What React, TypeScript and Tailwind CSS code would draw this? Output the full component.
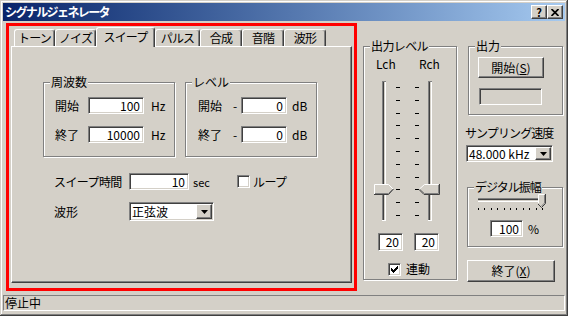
import React from "react";

const sunken =
  "border border-[#808080] border-b-white border-r-white shadow-[inset_1px_1px_0_#404040,inset_-1px_-1px_0_#d4d0c8]";
const raised =
  "bg-[#d4d0c8] border border-white border-b-[#404040] border-r-[#404040] shadow-[inset_-1px_-1px_0_#808080]";

function Edit({ value, className = "" }: { value: string; className?: string }) {
  return (
    <div className={`flex items-center justify-end bg-white pr-[3px] leading-[12px] ${sunken} ${className}`}>
      {value}
    </div>
  );
}

function Btn({ children, className = "" }: { children?: React.ReactNode; className?: string }) {
  return <div className={`flex items-center justify-center ${raised} ${className}`}>{children}</div>;
}

function Group({
  label,
  className = "",
  labelClass = "",
  children,
}: {
  label: string;
  className?: string;
  labelClass?: string;
  children?: React.ReactNode;
}) {
  return (
    <div className={`relative border border-[#808080] shadow-[inset_1px_1px_0_#fff,1px_1px_0_#fff] ${className}`}>
      <span className={`absolute -top-[8px] left-[6px] bg-[#d4d0c8] px-[1px] leading-[14px] whitespace-nowrap ${labelClass}`}>
        {label}
      </span>
      {children}
    </div>
  );
}

function Check({ checked = false }: { checked?: boolean }) {
  return (
    <div className={`flex h-[13px] w-[13px] shrink-0 items-center justify-center bg-white ${sunken}`}>
      {checked && (
        <svg width="7" height="7" viewBox="0 0 7 7" shapeRendering="crispEdges">
          <path d="M0 2h1v3h-1z M1 3h1v3h-1z M2 4h1v3h-1z M3 3h1v3h-1z M4 2h1v3h-1z M5 1h1v3h-1z M6 0h1v3h-1z" fill="#000" />
        </svg>
      )}
    </div>
  );
}

function Combo({ value, className = "" }: { value: string; className?: string }) {
  return (
    <div className={`flex items-stretch bg-white ${sunken} ${className}`}>
      <span className="flex flex-1 items-center pl-[2px] leading-[12px] whitespace-nowrap">{value}</span>
      <Btn className="m-[1px] w-[16px]">
        <svg width="7" height="4" viewBox="0 0 7 4">
          <polygon points="0,0 7,0 3.5,4" fill="#000" />
        </svg>
      </Btn>
    </div>
  );
}

function VSliders() {
  const ticks = Array.from({ length: 11 }, (_, i) => 9 + Math.round(i * 12.8));
  const track = (x: number) => (
    <g>
      <rect x={x} y={3} width={1} height={140} fill="#808080" />
      <rect x={x + 1} y={3} width={1} height={139} fill="#404040" />
      <rect x={x + 2} y={4} width={1} height={138} fill="#d4d0c8" />
      <rect x={x + 3} y={3} width={1} height={140} fill="#fff" />
      <rect x={x} y={3} width={4} height={1} fill="#808080" />
      <rect x={x} y={142} width={4} height={1} fill="#fff" />
    </g>
  );
  return (
    <svg width="76" height="146" viewBox="0 0 76 146" shapeRendering="crispEdges">
      {track(12)}
      {track(58)}
      {ticks.map((y) => (
        <g key={y}>
          <rect x={26} y={y} width={4} height={1} fill="#000" />
          <rect x={45} y={y} width={4} height={1} fill="#000" />
        </g>
      ))}
      <polygon points="4,106 18.5,106 23.5,111 18.5,116 4,116" fill="#d4d0c8" />
      <polyline points="4.5,116 4.5,106.5 18.5,106.5 23,111" fill="none" stroke="#fff" shapeRendering="auto" />
      <polyline points="5,115.5 18.5,115.5 22.5,111.5" fill="none" stroke="#808080" shapeRendering="auto" />
      <polyline points="23.5,111 18.5,116.5 4,116.5" fill="none" stroke="#404040" shapeRendering="auto" />
      <polygon points="49,111 54,106 69,106 69,116 54,116" fill="#d4d0c8" />
      <polyline points="49.5,111 54.5,106.5 68.5,106.5" fill="none" stroke="#fff" shapeRendering="auto" />
      <polyline points="68.5,107 68.5,115.5 54.5,115.5 50,111.5" fill="none" stroke="#808080" shapeRendering="auto" />
      <polyline points="69.5,106 69.5,116.5 54,116.5 49,111.5" fill="none" stroke="#404040" shapeRendering="auto" />
    </svg>
  );
}

function HSlider() {
  const ticks = Array.from({ length: 11 }, (_, i) => 4 + Math.round(i * 6.4));
  return (
    <svg width="76" height="22" viewBox="0 0 76 22" shapeRendering="crispEdges">
      <rect x={4} y={6} width={66} height={1} fill="#808080" />
      <rect x={4} y={7} width={65} height={1} fill="#404040" />
      <rect x={5} y={8} width={64} height={1} fill="#d4d0c8" />
      <rect x={4} y={9} width={66} height={1} fill="#fff" />
      {ticks.map((x) => (
        <rect key={x} x={x} y={16} width={1} height={2} fill="#000" />
      ))}
      <polygon points="64,2 71,2 71,11 67.5,14.5 64,11" fill="#d4d0c8" />
      <polyline points="64.5,11 64.5,2.5 70.5,2.5" fill="none" stroke="#fff" shapeRendering="auto" />
      <polyline points="70.5,3 70.5,11 67.5,14" fill="none" stroke="#808080" shapeRendering="auto" />
      <polyline points="71.5,2 71.5,11.5 67.5,15.5 64,12" fill="none" stroke="#404040" shapeRendering="auto" />
    </svg>
  );
}

export default function App() {
  const tabs = [
    { label: "トーン", w: "w-[41px]" },
    { label: "ノイズ", w: "w-[41px]" },
    { label: "スイープ", w: "w-[59px]", active: true },
    { label: "パルス", w: "w-[45px]" },
    { label: "合成", w: "w-[42px]" },
    { label: "音階", w: "w-[42px]" },
    { label: "波形", w: "w-[42px]" },
  ];

  return (
    <div className="relative flex h-[316px] w-[568px] flex-col overflow-hidden bg-[#d4d0c8] p-[3px] font-['Noto_Sans_CJK_JP',sans-serif] text-[12px] leading-[14px] text-black shadow-[inset_-1px_-1px_0_#404040,inset_1px_1px_0_#d4d0c8,inset_-2px_-2px_0_#808080,inset_2px_2px_0_#fff]">
      {/* title bar */}
      <div className="flex h-[18px] shrink-0 items-center bg-gradient-to-r from-[#0a246a] to-[#a6caf0] pl-[2px] pr-[2px]">
        <span className="flex-1 text-[12px] font-bold tracking-[-1.6px] text-white">シグナルジェネレータ</span>
        <Btn className="h-[14px] w-[16px] text-[11px] font-bold leading-none">?</Btn>
        <Btn className="h-[14px] w-[16px]">
          <svg width="8" height="7" viewBox="0 0 8 7">
            <path d="M0.5 0 L7.5 7 M7.5 0 L0.5 7" stroke="#000" strokeWidth="1.7" />
          </svg>
        </Btn>
      </div>

      {/* main */}
      <div className="flex h-[274px] shrink-0 items-start">
        {/* tab control */}
        <div className="ml-[8px] mt-[6px] flex w-[341px] flex-col">
          <div className="relative z-10 flex h-[19px] items-end pl-[3px]">
            {tabs.map((t) =>
              t.active ? (
                <div
                  key={t.label}
                  className={`${t.w} -mb-[1px] flex h-[20px] items-start justify-center rounded-t-[3px] border-l border-t border-r border-white border-r-[#404040] bg-[#d4d0c8] pt-[2px] leading-[14px] tracking-[-0.8px] shadow-[inset_-1px_0_0_#808080]`}
                >
                  {t.label}
                </div>
              ) : (
                <div
                  key={t.label}
                  className={`${t.w} flex h-[17px] items-center justify-center rounded-t-[3px] border-l border-t border-r border-white border-r-[#404040] leading-[14px] tracking-[-0.8px] shadow-[inset_-1px_0_0_#808080]`}
                >
                  {t.label}
                </div>
              )
            )}
          </div>
          <div className="h-[237px] border border-white border-b-[#404040] border-r-[#404040] pl-[31px] pt-[35px] shadow-[inset_-1px_-1px_0_#808080]">
            <div className="flex gap-[10px]">
              <Group label="周波数" className="flex h-[75px] w-[132px] flex-col gap-[12px] pl-[11px] pt-[14px]">
                <div className="flex h-[17px] items-center">
                  <span className="w-[33px]">開始</span>
                  <Edit value="100" className="h-[17px] w-[56px]" />
                  <span className="ml-[7px]">Hz</span>
                </div>
                <div className="flex h-[17px] items-center">
                  <span className="w-[33px]">終了</span>
                  <Edit value="10000" className="h-[17px] w-[56px]" />
                  <span className="ml-[7px]">Hz</span>
                </div>
              </Group>
              <Group label="レベル" className="flex h-[75px] w-[132px] flex-col gap-[12px] pl-[12px] pt-[14px]">
                <div className="flex h-[17px] items-center">
                  <span className="w-[35px]">開始</span>
                  <span className="w-[8px]">-</span>
                  <Edit value="0" className="h-[17px] w-[46px]" />
                  <span className="ml-[5px]">dB</span>
                </div>
                <div className="flex h-[17px] items-center">
                  <span className="w-[35px]">終了</span>
                  <span className="w-[8px]">-</span>
                  <Edit value="0" className="h-[17px] w-[46px]" />
                  <span className="ml-[5px]">dB</span>
                </div>
              </Group>
            </div>
            <div className="ml-[11px] mt-[16px] flex h-[17px] items-center">
              <span className="w-[75px] tracking-[-0.6px]">スイープ時間</span>
              <Edit value="10" className="h-[17px] w-[60px]" />
              <span className="ml-[4px] w-[44px] text-[11px]">sec</span>
              <Check />
              <span className="ml-[3px] tracking-[-0.6px]">ループ</span>
            </div>
            <div className="ml-[11px] mt-[12px] flex h-[19px] items-center">
              <span className="w-[75px]">波形</span>
              <Combo value="正弦波" className="h-[19px] w-[85px]" />
            </div>
          </div>
        </div>

        {/* output level */}
        <Group
          label="出力レベル"
          labelClass="tracking-[-0.6px]"
          className="ml-[11px] mt-[25px] flex h-[234px] w-[94px] shrink-0 flex-col"
        >
          <div className="ml-[12px] mt-[11px] flex h-[12px] items-center leading-[12px]">
            <span className="w-[43px]">Lch</span>
            <span>Rch</span>
          </div>
          <div className="ml-[6px] mt-[8px]">
            <VSliders />
          </div>
          <div className="ml-[14px] mt-[9px] flex gap-[11px]">
            <Edit value="20" className="h-[18px] w-[25px]" />
            <Edit value="20" className="h-[18px] w-[25px]" />
          </div>
          <div className="ml-[24px] mt-[11px] flex items-center">
            <Check checked />
            <span className="ml-[5px]">連動</span>
          </div>
        </Group>

        {/* right column */}
        <div className="ml-[7px] mt-[25px] flex w-[100px] shrink-0 flex-col">
          <Group label="出力" className="ml-[4px] flex h-[69px] w-[95px] flex-col pl-[9px] pt-[10px]">
            <Btn className="h-[21px] w-[66px]">
              開始(<span className="underline">S</span>)
            </Btn>
            <div className={`ml-[1px] mt-[10px] h-[17px] w-[63px] ${sunken}`} />
          </Group>
          <span className="ml-[1px] mt-[11px] whitespace-nowrap tracking-[-0.9px]">サンプリング速度</span>
          <Combo value="48.000 kHz" className="ml-[2px] mt-[5px] h-[17px] w-[87px]" />
          <Group
            label="デジタル振幅"
            labelClass="tracking-[-1px]"
            className="ml-[3px] mt-[25px] flex h-[60px] w-[96px] flex-col"
          >
            <div className="ml-[6px] mt-[4px]">
              <HSlider />
            </div>
            <div className="ml-[22px] mt-[6px] flex items-center">
              <Edit value="100" className="h-[17px] w-[33px]" />
              <span className="ml-[5px]">%</span>
            </div>
          </Group>
          <Btn className="ml-[3px] mt-[13px] h-[22px] w-[88px]">
            終了(<span className="underline">X</span>)
          </Btn>
        </div>
      </div>

      {/* status bar */}
      <div className="flex h-[16px] shrink-0 items-center border border-[#808080] border-b-white border-r-white pl-[1px] leading-[14px]">
        停止中
      </div>

      {/* red highlight annotation */}
      <div className="pointer-events-none absolute left-[6px] top-[23px] h-[268px] w-[351px] border-[3px] border-[#ff0000]" />
    </div>
  );
}
